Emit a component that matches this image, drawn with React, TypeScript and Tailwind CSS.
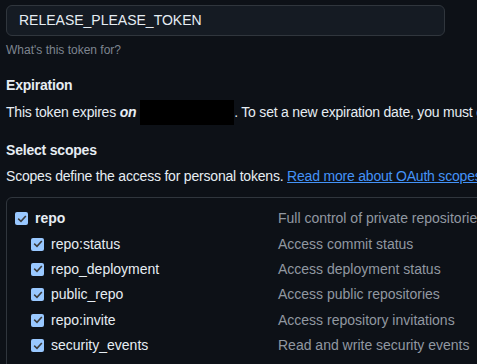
import React from 'react';

type Scope = { name: string; desc: string; child?: boolean };

const scopes: Scope[] = [
  { name: 'repo', desc: 'Full control of private repositories' },
  { name: 'repo:status', desc: 'Access commit status', child: true },
  { name: 'repo_deployment', desc: 'Access deployment status', child: true },
  { name: 'public_repo', desc: 'Access public repositories', child: true },
  { name: 'repo:invite', desc: 'Access repository invitations', child: true },
  { name: 'security_events', desc: 'Read and write security events', child: true },
];

const Check: React.FC = () => (
  <span className="w-[13px] h-[13px] rounded-[2px] bg-[#99c8ff] flex items-center justify-center shrink-0">
    <svg width="10" height="10" viewBox="0 0 10 10" fill="none">
      <path d="M1.8 5.2 L4 7.4 L8.3 2.6" stroke="#3b3b3b" strokeWidth="1.6" strokeLinecap="square" />
    </svg>
  </span>
);

const App: React.FC = () => {
  return (
    <div
      className="w-[477px] h-[364px] overflow-hidden bg-[#0d1117] text-[#e6edf3] text-[14px] pl-[6px] pt-[5px]"
      style={{ fontFamily: '"Liberation Sans", Arial, sans-serif' }}
    >
      <div className="w-[439px] h-[31px] rounded-[6px] border border-[#30363d] bg-[#151b23] flex items-center px-[12px] text-[14px]">
        RELEASE_PLEASE_TOKEN
      </div>
      <p className="mt-[5px] text-[12px] leading-[18px] text-[#7d8590]">What's this token for?</p>

      <h3 className="mt-[16px] font-semibold leading-[21px] tracking-[-0.2px]">Expiration</h3>
      <p className="mt-[6px] leading-[21px] whitespace-nowrap tracking-[-0.2px]">
        This token expires <em className="font-semibold">on</em>{' '}
        <span className="inline-block align-middle w-[94px] h-[25px] bg-black -mt-[2px]"></span>. To set a new
        expiration date, you must generate a new token.
      </p>

      <h3 className="mt-[15px] font-semibold leading-[21px] tracking-[-0.2px]">Select scopes</h3>
      <p className="mt-[5px] leading-[21px] whitespace-nowrap tracking-[-0.2px]">
        Scopes define the access for personal tokens.{' '}
        <a className="text-[#4493f8] underline">Read more about OAuth scopes.</a>
      </p>

      <div className="mt-[10px] w-[520px] h-[200px] rounded-[6px] border border-[#30363d] pt-[8px] pl-[8px]">
        {scopes.map((s) => (
          <div key={s.name} className="flex items-center h-[25.4px]">
            <div className={`flex items-center gap-[7px] w-[263px] ${s.child ? 'pl-[16px]' : ''}`}>
              <Check />
              <span className={s.child ? '' : 'font-semibold'}>{s.name}</span>
            </div>
            <span className="text-[#9198a1] whitespace-nowrap">{s.desc}</span>
          </div>
        ))}
      </div>
    </div>
  );
};

export default App;
